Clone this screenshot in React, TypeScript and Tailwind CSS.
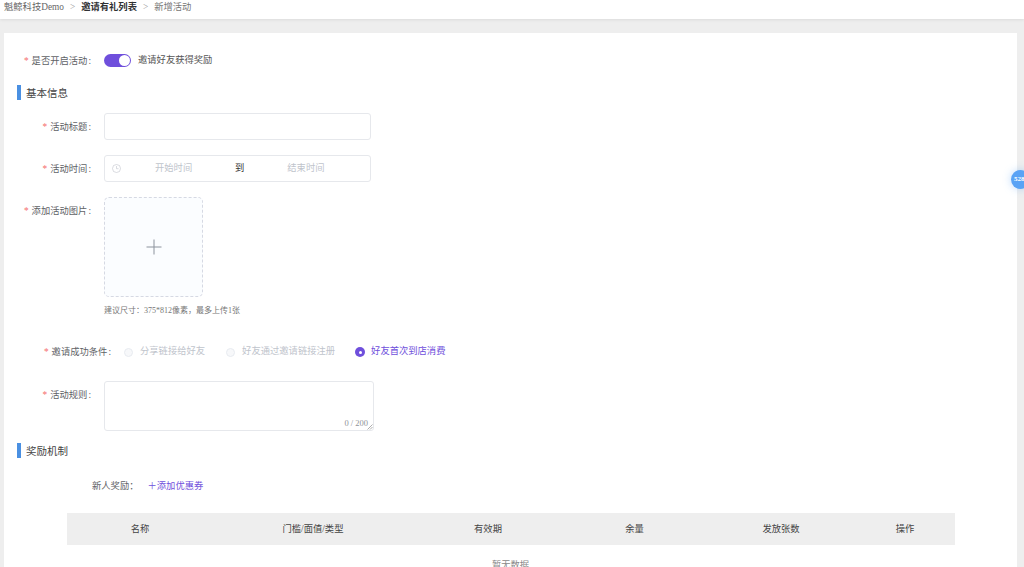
import React from "react";

const font = { fontFamily: '"Liberation Serif", "Noto Sans CJK SC", serif' };

function Label({ w, text, className = "" }: { w: string; text: string; className?: string }) {
  return (
    <div className={`${w} shrink-0 flex justify-end items-center text-[9.3px] leading-[14px] text-[#606266] whitespace-nowrap ${className}`}>
      <span className="text-[#f56c6c] mr-[3px]">*</span>
      <span>{text}</span>
      <span className="ml-[1px]">:</span>
    </div>
  );
}

function Section({ title, className }: { title: string; className: string }) {
  return (
    <div className={`flex items-start h-[15px] ml-[13px] ${className}`}>
      <div className="w-1 h-[15px] bg-[#4a90e2]" />
      <div className="ml-[5px] mt-[1px] text-[10.5px] leading-[15px] text-[#444]">{title}</div>
    </div>
  );
}

function Radio({ text, className }: { text: string; className: string }) {
  return (
    <div className={`flex items-center ${className}`}>
      <div className="w-[9px] h-[9px] rounded-full border border-[#e8ebf0] bg-[#f7f8fa]" />
      <span className="ml-[7px] text-[9.3px] text-[#c0c4cc] whitespace-nowrap">{text}</span>
    </div>
  );
}

export default function App() {
  const cols = [
    ["名称", "w-[146px]"],
    ["门槛/面值/类型", "w-[200px]"],
    ["有效期", "w-[150px]"],
    ["余量", "w-[143px]"],
    ["发放张数", "w-[150px]"],
    ["操作", "w-[98px]"],
  ];
  return (
    <div style={font} className="relative w-[1024px] h-[567px] overflow-hidden bg-[#eeeeee]">
      <div className="h-[19px] bg-white shadow-[0_1px_3px_rgba(0,0,0,0.08)] pl-1 flex items-start text-[9.3px] leading-[14px] whitespace-nowrap">
        <span className="text-[#666]">魁鲸科技Demo</span>
        <span className="text-[#999] mx-[6px]">&gt;</span>
        <span className="text-[#303133] font-bold">邀请有礼列表</span>
        <span className="text-[#999] mx-[6px]">&gt;</span>
        <span className="text-[#777]">新增活动</span>
      </div>

      <div className="mt-[14px] ml-1 mr-[7px] h-[600px] bg-white overflow-hidden">
        <div className="flex items-center mt-[21px] h-[13px]">
          <Label w="w-[87px]" text="是否开启活动" />
          <div className="ml-[13px] w-[27px] h-[13px] rounded-full bg-[#6f4fdc] flex items-center justify-end pr-[1px]">
            <div className="w-[11px] h-[11px] rounded-full bg-white" />
          </div>
          <span className="ml-[7px] text-[9.3px] text-[#555] whitespace-nowrap">邀请好友获得奖励</span>
        </div>

        <Section title="基本信息" className="mt-[18px]" />

        <div className="flex items-center mt-[13px]">
          <Label w="w-[87px]" text="活动标题" />
          <div className="ml-[13px] w-[267px] h-[27px] bg-white border border-[#e6e8ec] rounded-[3px]" />
        </div>

        <div className="flex items-center mt-[15px]">
          <Label w="w-[87px]" text="活动时间" />
          <div className="ml-[13px] w-[267px] h-[27px] bg-white border border-[#e6e8ec] rounded-[3px] flex items-center text-[9.3px]">
            <svg className="ml-[7px] shrink-0" width="9" height="9" viewBox="0 0 9 9" fill="none" stroke="#c8ccd3" strokeWidth="0.7">
              <circle cx="4.5" cy="4.5" r="4" />
              <path d="M4.5 2v2.7h2" />
            </svg>
            <span className="ml-[34px] w-[37px] text-[#c0c4cc] whitespace-nowrap">开始时间</span>
            <span className="ml-[43px] text-[#333]">到</span>
            <span className="ml-[43px] text-[#c0c4cc] whitespace-nowrap">结束时间</span>
          </div>
        </div>

        <div className="flex items-start mt-[16px]">
          <Label w="w-[87px]" text="添加活动图片" className="pt-[6px]" />
          <div className="ml-[13px] -mt-[1px]">
            <div className="w-[99px] h-[100px] bg-[#fbfdff] border border-dashed border-[#d6d9e3] rounded-[5px] flex items-center justify-center">
              <svg width="16" height="16" viewBox="0 0 16 16" stroke="#8c939d" strokeWidth="1">
                <path d="M8 0.5v15M0.5 8h15" />
              </svg>
            </div>
            <div className="mt-[8px] text-[8px] leading-3 text-[#777] whitespace-nowrap">建议尺寸：375*812像素，最多上传1张</div>
          </div>
        </div>

        <div className="flex items-center mt-[28px] h-[14px]">
          <Label w="w-[107px]" text="邀请成功条件" />
          <Radio text="分享链接给好友" className="ml-[13px]" />
          <Radio text="好友通过邀请链接注册" className="ml-[21px]" />
          <div className="flex items-center ml-5">
            <div className="w-[10px] h-[10px] rounded-full bg-[#6f4fdc] flex items-center justify-center">
              <div className="w-[3px] h-[3px] rounded-full bg-white" />
            </div>
            <span className="ml-[6px] text-[9.3px] text-[#6f4fdc] whitespace-nowrap">好友首次到店消费</span>
          </div>
        </div>

        <div className="flex items-start mt-[23px]">
          <Label w="w-[87px]" text="活动规则" className="pt-[6px]" />
          <div className="ml-[13px] -mt-[1px] relative w-[270px] h-[50px] bg-white border border-[#e6e8ec] rounded-[3px]">
            <span className="absolute right-[5px] bottom-[1px] text-[8.5px] leading-3 text-[#909399]">0 / 200</span>
            <svg className="absolute right-0 bottom-0" width="6" height="6" viewBox="0 0 6 6" stroke="#777" strokeWidth="0.6">
              <path d="M0.5 5.5 5.5 0.5M3 5.5 5.5 3" />
            </svg>
          </div>
        </div>

        <Section title="奖励机制" className="mt-[12px]" />

        <div className="flex items-center mt-[22px] h-[14px] pl-[88px] text-[9.3px] whitespace-nowrap">
          <span className="text-[#606266]">新人奖励：</span>
          <span className="ml-[9px] text-[#6f4fdc]">＋添加优惠券</span>
        </div>

        <div className="mt-[19px] ml-[63px] w-[888px] h-[32px] pt-[1px] bg-[#eeeeee] flex items-center text-[9.3px] text-[#444]">
          {cols.map(([t, w]) => (
            <div key={t} className={`${w} text-center whitespace-nowrap`}>{t}</div>
          ))}
        </div>
        <div className="w-[1013px] mt-[13px] text-center text-[9.3px] leading-[14px] text-[#888]">暂无数据</div>
      </div>

      <div className="absolute left-[1011px] top-[170px] w-[19px] h-[19px] rounded-full bg-[#5aa3f5] shadow-[0_0_8px_rgba(90,163,245,0.4)] flex items-center pl-[3px] text-[7px] font-bold text-white overflow-hidden">
        528
      </div>
    </div>
  );
}
